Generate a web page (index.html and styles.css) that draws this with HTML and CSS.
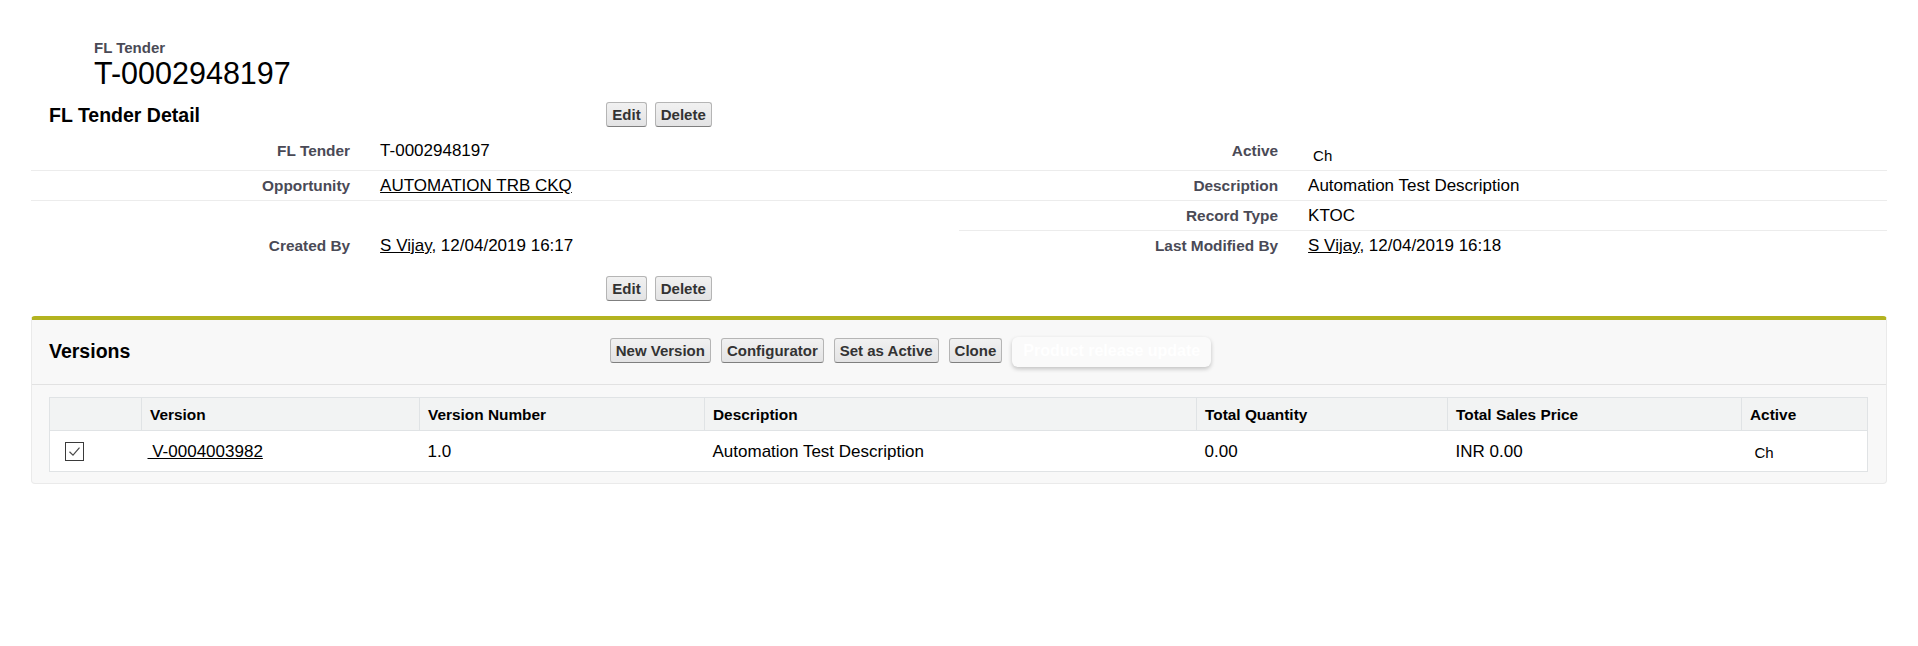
FILE: index.html
```html
<!DOCTYPE html>
<html lang="en">
<head>
<meta charset="utf-8">
<title>FL Tender: T-0002948197</title>
<link rel="stylesheet" href="styles.css">
</head>
<body>
<div class="page">
  <div class="ptitle">
    <div class="ptype">FL Tender</div>
    <h1 class="pdesc">T-0002948197</h1>
  </div>

  <div class="detail">
    <div class="pbhead">
      <h2 class="pbtitle">FL Tender Detail</h2>
      <div class="btns">
        <button class="btn">Edit</button>
        <button class="btn">Delete</button>
      </div>
    </div>

    <div class="dlist">
      <div class="lbl r1">FL Tender</div>
      <div class="val r1">T-0002948197</div>
      <div class="lbl r1">Active</div>
      <div class="val r1"><span class="chk" title="Checked">Ch</span></div>

      <div class="lbl">Opportunity</div>
      <div class="val"><a href="#">AUTOMATION TRB CKQ</a></div>
      <div class="lbl">Description</div>
      <div class="val">Automation Test Description</div>

      <div class="lbl nb"></div>
      <div class="val nb"></div>
      <div class="lbl">Record Type</div>
      <div class="val">KTOC</div>

      <div class="lbl nb">Created By</div>
      <div class="val nb"><a href="#">S Vijay</a>, 12/04/2019 16:17</div>
      <div class="lbl nb">Last Modified By</div>
      <div class="val nb"><a href="#">S Vijay</a>, 12/04/2019 16:18</div>
    </div>

    <div class="pbbottom">
      <div class="btns">
        <button class="btn">Edit</button>
        <button class="btn">Delete</button>
      </div>
    </div>
  </div>

  <div class="related">
    <div class="rhead">
      <h3 class="rtitle">Versions</h3>
      <div class="btns rbtns">
        <button class="btn">New Version</button>
        <button class="btn">Configurator</button>
        <button class="btn">Set as Active</button>
        <button class="btn">Clone</button>
        <button class="prod">Product release update</button>
      </div>
    </div>
    <div class="rbody">
      <table class="vt">
        <colgroup>
          <col class="c1"><col class="c2"><col class="c3"><col class="c4"><col class="c5"><col class="c6"><col class="c7">
        </colgroup>
        <thead>
          <tr>
            <th></th>
            <th>Version</th>
            <th>Version Number</th>
            <th>Description</th>
            <th>Total Quantity</th>
            <th>Total Sales Price</th>
            <th>Active</th>
          </tr>
        </thead>
        <tbody>
          <tr>
            <td class="cb">
              <svg class="box" width="19" height="19" viewBox="0 0 19 19" aria-hidden="true">
                <rect x="0.5" y="0.5" width="18" height="18" fill="#fff" stroke="#3a3a3a" stroke-width="1"/>
                <polyline points="4.5,9.8 8,13.2 14.5,5.6" fill="none" stroke="#4a4a4a" stroke-width="1.2"/>
              </svg>
            </td>
            <td class="vl"><a href="#">&nbsp;V-0004003982</a></td>
            <td>1.0</td>
            <td>Automation Test Description</td>
            <td>0.00</td>
            <td>INR 0.00</td>
            <td><span class="chk t" title="Checked">Ch</span></td>
          </tr>
        </tbody>
      </table>
    </div>
  </div>
</div>
</body>
</html>
```

FILE: styles.css
```css
body {
  margin: 0;
  background: #fff;
  color: #000;
  font-family: "Liberation Sans", Arial, sans-serif;
}

.page {
  padding: 39px 31px 0;
}

/* page title */
.ptitle {
  padding-left: 63px;
}
.ptype {
  font-size: 15px;
  font-weight: bold;
  line-height: 17px;
  color: #4a4a56;
}
.pdesc {
  margin: 0;
  font-size: 30.5px;
  font-weight: normal;
  line-height: 35px;
  color: #000;
}

/* block header */
.pbhead {
  display: flex;
  align-items: center;
  height: 25px;
  margin-top: 11px;
}
.pbtitle {
  box-sizing: border-box;
  width: 31%;
  margin: 0;
  padding-left: 18px;
  font-size: 19.5px;
  font-weight: bold;
  line-height: 22px;
}

.btns {
  display: flex;
  align-items: center;
  gap: 8px;
}
.btn {
  box-sizing: border-box;
  height: 25px;
  margin: 0;
  padding: 0 5px;
  font-family: "Liberation Sans", Arial, sans-serif;
  font-size: 15px;
  font-weight: bold;
  line-height: 23px;
  color: #333;
  background: linear-gradient(#f1f1f1, #e3e3e4);
  border: 1px solid #b5b5b5;
  border-bottom-color: #7f7f7f;
  border-radius: 3px;
}

/* detail list */
.dlist {
  display: grid;
  grid-template-columns: 18% 32% 18% 32%;
  margin-top: 9px;
}
.lbl {
  padding: 5px 15px 5px 0;
  text-align: right;
  font-size: 15.4px;
  font-weight: bold;
  line-height: 19px;
  color: #4a4a56;
  border-bottom: 1px solid #ececec;
}
.val {
  padding: 5px 0 5px 15px;
  font-size: 17px;
  line-height: 19px;
  color: #000;
  border-bottom: 1px solid #ececec;
}
.r1 {
  padding-bottom: 10px;
}
.nb {
  border-bottom: none;
}
a {
  color: #000;
  text-decoration: underline;
}

.chk {
  display: inline-block;
  box-sizing: border-box;
  vertical-align: top;
  height: 19px;
  margin-left: 5px;
  padding-top: 8px;
  white-space: nowrap;
  font-size: 15px;
  line-height: 14px;
  color: #000;
}
.chk.t {
  margin-top: -4px;
}

.pbbottom {
  margin-top: 16px;
  padding-left: 31%;
}

/* related list */
.related {
  margin-top: 15px;
  background: #f8f8f8;
  border: 1px solid #eaeaea;
  border-top: 4px solid #b3b320;
  border-radius: 4px;
}
.rhead {
  box-sizing: border-box;
  display: flex;
  align-items: center;
  height: 65px;
  padding-bottom: 3px;
  border-bottom: 1px solid #e2e2e2;
}
.rtitle {
  box-sizing: border-box;
  width: 31%;
  margin: 0;
  padding-left: 17px;
  font-size: 19.5px;
  font-weight: bold;
  line-height: 22px;
}
.rbtns {
  gap: 10px;
  padding-left: 3px;
}
.prod {
  height: 30px;
  margin: 3px 0 0;
  padding: 0 11px 2px;
  font-family: "Liberation Sans", Arial, sans-serif;
  font-size: 16px;
  font-weight: bold;
  line-height: 28px;
  color: #fff;
  background: #fafafa;
  border: none;
  border-radius: 6px;
  box-shadow: 0 2px 4px rgba(0, 0, 0, 0.22);
}

.rbody {
  padding: 12px 18px 11px 17px;
}
.vt {
  width: 100%;
  table-layout: fixed;
  border-collapse: collapse;
  background: #fff;
  border: 1px solid #e0e3e5;
}
.c1 { width: 92px; }
.c2 { width: 278px; }
.c3 { width: 285px; }
.c4 { width: 492px; }
.c5 { width: 251px; }
.c6 { width: 294px; }

.vt th {
  padding: 8px 8px 6px;
  text-align: left;
  font-size: 15.4px;
  font-weight: bold;
  line-height: 18px;
  color: #000;
  background: #f2f3f3;
  border-bottom: 1px solid #e0e3e5;
  border-left: 1px solid #e0e3e5;
}
.vt td {
  padding: 11px 8px 10px;
  font-size: 17px;
  line-height: 19px;
  color: #000;
  vertical-align: middle;
  white-space: nowrap;
}
.vt td.cb {
  padding-left: 15px;
}
.vt td.vl {
  padding-left: 6px;
}
.box {
  display: block;
}
```
